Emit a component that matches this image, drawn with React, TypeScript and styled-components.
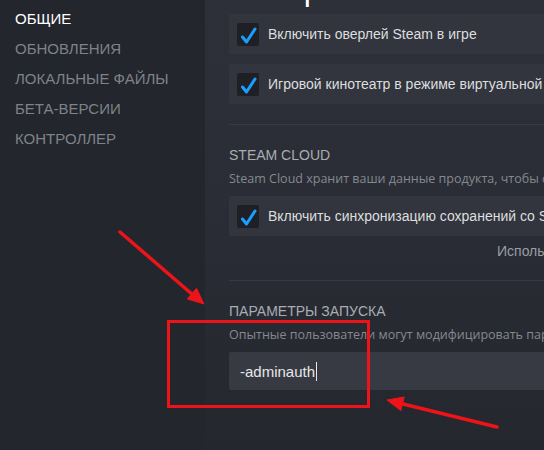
import React from "react";
import styled, { createGlobalStyle } from "styled-components";

const GlobalStyle = createGlobalStyle`
  html, body {
    margin: 0;
    padding: 0;
    background: #23262d;
    overflow: hidden;
  }
  * {
    box-sizing: border-box;
  }
`;

const Page = styled.div`
  position: relative;
  display: grid;
  grid-template-columns: 205px 1fr;
  width: 544px;
  height: 450px;
  overflow: hidden;
  font-family: "Liberation Sans", Arial, sans-serif;
`;

const Sidebar = styled.nav`
  display: flex;
  flex-direction: column;
  padding-top: 4px;
  background: #23262d;
`;

const NavItem = styled.div<{ $active?: boolean }>`
  padding-left: 15px;
  font-size: 15px;
  line-height: 30px;
  text-transform: uppercase;
  white-space: nowrap;
  color: ${(p) => (p.$active ? "#ffffff" : "#7f8288")};
`;

const Main = styled.main`
  min-width: 0;
  overflow: hidden;
  padding-left: 24px;
  background: linear-gradient(180deg, #2d3038 0%, #2a2d35 45%, #24272e 100%);
`;

const Content = styled.div`
  display: flex;
  flex-direction: column;
  width: 440px;
`;

// only the descender of the page title peeks in at the top
const Heading = styled.h1`
  margin: -29px 0 7px;
  height: 36px;
  font-size: 32px;
  font-weight: 400;
  line-height: 36px;
  color: #ffffff;
  white-space: nowrap;
`;

const Rows = styled.div`
  display: flex;
  flex-direction: column;
  gap: 10px;
`;

const CheckRow = styled.label`
  display: flex;
  align-items: center;
  gap: 9px;
  height: 40px;
  padding-left: 8px;
  border-radius: 2px;
  background: #32353d;
  font-size: 14px;
  color: #dcdedf;
  white-space: nowrap;
`;

const Box = styled.span`
  display: flex;
  flex: none;
  width: 22px;
  height: 23px;
  border-radius: 2px;
  background: #1e2025;
`;

const Divider = styled.hr<{ $top: number }>`
  margin: ${(p) => p.$top}px 0 0;
  border: 0;
  border-top: 1px solid #373a42;
`;

const SectionTitle = styled.h2`
  margin: 21px 0 0;
  font-size: 14px;
  font-weight: 400;
  line-height: 18px;
  color: #a9adb2;
  text-transform: uppercase;
  white-space: nowrap;
`;

const Description = styled.p`
  margin: 6px 0 8px;
  font-family: "Open Sans", "Liberation Sans", sans-serif;
  font-size: 12.5px;
  line-height: 18px;
  color: #858990;
  white-space: nowrap;
`;

const Usage = styled.div`
  margin-top: 6px;
  padding-left: 268px;
  font-size: 14px;
  line-height: 18px;
  color: #9a9ea3;
  white-space: nowrap;
`;

const LaunchInput = styled.div`
  display: flex;
  align-items: center;
  height: 38px;
  padding-left: 11px;
  border-radius: 2px;
  background: #373a42;
  font-size: 15px;
  color: #e6e7e8;
`;

const Caret = styled.span`
  display: inline-block;
  width: 1px;
  height: 19px;
  margin-left: 1px;
  background: #e6e7e8;
`;

const Overlay = styled.svg`
  position: absolute;
  inset: 0;
  pointer-events: none;
`;

const CheckMark = () => (
  <svg width="22" height="23" viewBox="0 0 22 23">
    <path
      d="M5.5 14 L9.5 19 L18 6"
      fill="none"
      stroke="#1a9fff"
      strokeWidth="3"
      strokeLinecap="round"
      strokeLinejoin="round"
    />
  </svg>
);

const Option = ({ label }: { label: string }) => (
  <CheckRow>
    <Box>
      <CheckMark />
    </Box>
    {label}
  </CheckRow>
);

const navItems = ["Общие", "Обновления", "Локальные файлы", "Бета-версии", "Контроллер"];

export default function App() {
  return (
    <>
      <GlobalStyle />
      <Page>
        <Sidebar>
          {navItems.map((item, i) => (
            <NavItem key={item} $active={i === 0}>
              {item}
            </NavItem>
          ))}
        </Sidebar>
        <Main>
          <Content>
            <Heading>Обзор</Heading>
            <Rows>
              <Option label="Включить оверлей Steam в игре" />
              <Option label="Игровой кинотеатр в режиме виртуальной реальности" />
            </Rows>
            <Divider $top={20} />

            <SectionTitle>Steam Cloud</SectionTitle>
            <Description>
              Steam Cloud хранит ваши данные продукта, чтобы сохранения не терялись
            </Description>
            <Option label="Включить синхронизацию сохранений со Steam Cloud" />
            <Usage>Использовано: 1,2 МБ</Usage>
            <Divider $top={20} />

            <SectionTitle>Параметры запуска</SectionTitle>
            <Description>
              Опытные пользователи могут модифицировать параметры запуска
            </Description>
            <LaunchInput>
              -adminauth
              <Caret />
            </LaunchInput>
          </Content>
        </Main>

        <Overlay width="544" height="450" viewBox="0 0 544 450">
          <g fill="#ec1418" stroke="#ec1418">
            <line x1="120" y1="232" x2="193" y2="295" strokeWidth="3.5" strokeLinecap="round" />
            <polygon points="204,304 196.5,288.3 187.3,298.9" strokeWidth="1" />
            <line x1="497" y1="427" x2="401" y2="403.5" strokeWidth="3.5" strokeLinecap="round" />
            <polygon points="387,400 404.2,397 400.8,410.6" strokeWidth="1" />
          </g>
          <rect
            x="168.5"
            y="321.5"
            width="200"
            height="85"
            fill="none"
            stroke="#ec1418"
            strokeWidth="3"
          />
        </Overlay>
      </Page>
    </>
  );
}
